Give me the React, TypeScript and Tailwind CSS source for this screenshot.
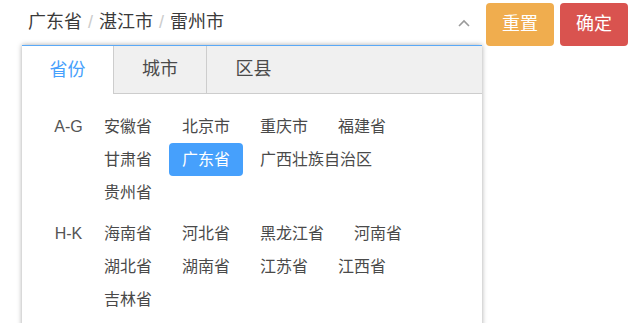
import React from "react";

const sections: { label: string; items: string[]; selected?: string }[] = [
  {
    label: "A-G",
    items: ["安徽省", "北京市", "重庆市", "福建省", "甘肃省", "广东省", "广西壮族自治区", "贵州省"],
    selected: "广东省",
  },
  {
    label: "H-K",
    items: ["海南省", "河北省", "黑龙江省", "河南省", "湖北省", "湖南省", "江苏省", "江西省", "吉林省"],
  },
];

export default function App() {
  return (
    <div className="relative w-[638px] h-[323px] overflow-hidden bg-white font-['Liberation_Sans','Noto_Sans_CJK_SC',sans-serif]">
      <div className="flex items-start">
        <div className="relative ml-[22px] w-[460px]">
          <div className="h-[45px] flex items-center pl-[6px] pr-[12px] text-[18px] text-[#3a3a3a]">
            <span>广东省</span>
            <span className="text-[#ccc] mx-[6px]">/</span>
            <span>湛江市</span>
            <span className="text-[#ccc] mx-[6px]">/</span>
            <span>雷州市</span>
            <span className="ml-auto">
              <svg width="12" height="8" viewBox="0 0 12 8" fill="none">
                <path d="M1 7 L6 2 L11 7" stroke="#9a9a9a" strokeWidth="1.6" />
              </svg>
            </span>
          </div>
          <div className="absolute top-[45px] left-0 w-[460px] h-[300px] bg-white border-t border-[#5aa9f7] shadow-[0_0_5px_rgba(0,0,0,0.35)]">
            <div className="flex h-[48px] bg-[#f0f0f0] border-b border-[#cdcdcd] text-[18px]">
              <div className="w-[92px] h-[48px] bg-white border-r border-[#cdcdcd] flex items-center justify-center text-[#46a0fc]">
                省份
              </div>
              <div className="w-[93px] border-r border-[#cdcdcd] flex items-center justify-center text-[#4a4a4a]">
                城市
              </div>
              <div className="w-[93px] flex items-center justify-center text-[#4a4a4a]">区县</div>
            </div>
            <div className="pt-[16px] pl-[24px]">
              {sections.map((s) => (
                <div key={s.label} className="flex mb-[8px]">
                  <div className="w-[45px] h-[33px] leading-[33px] text-center text-[16px] text-[#555]">
                    {s.label}
                  </div>
                  <div className="w-[335px] flex flex-wrap gap-x-[4px] text-[16px]">
                    {s.items.map((it) => (
                      <div
                        key={it}
                        className={
                          it === s.selected
                            ? "h-[33px] leading-[33px] px-[13px] rounded-[4px] bg-[#46a0fc] text-white"
                            : "h-[33px] leading-[33px] px-[13px] text-[#4a4a4a]"
                        }
                      >
                        {it}
                      </div>
                    ))}
                  </div>
                </div>
              ))}
            </div>
          </div>
        </div>
        <div className="flex gap-[6px] ml-[4px] mt-[3px]">
          <button className="w-[68px] h-[43px] rounded-[4px] bg-[#f0ad4e] text-white text-[18px]">重置</button>
          <button className="w-[68px] h-[43px] rounded-[4px] bg-[#d9534f] text-white text-[18px]">确定</button>
        </div>
      </div>
    </div>
  );
}
